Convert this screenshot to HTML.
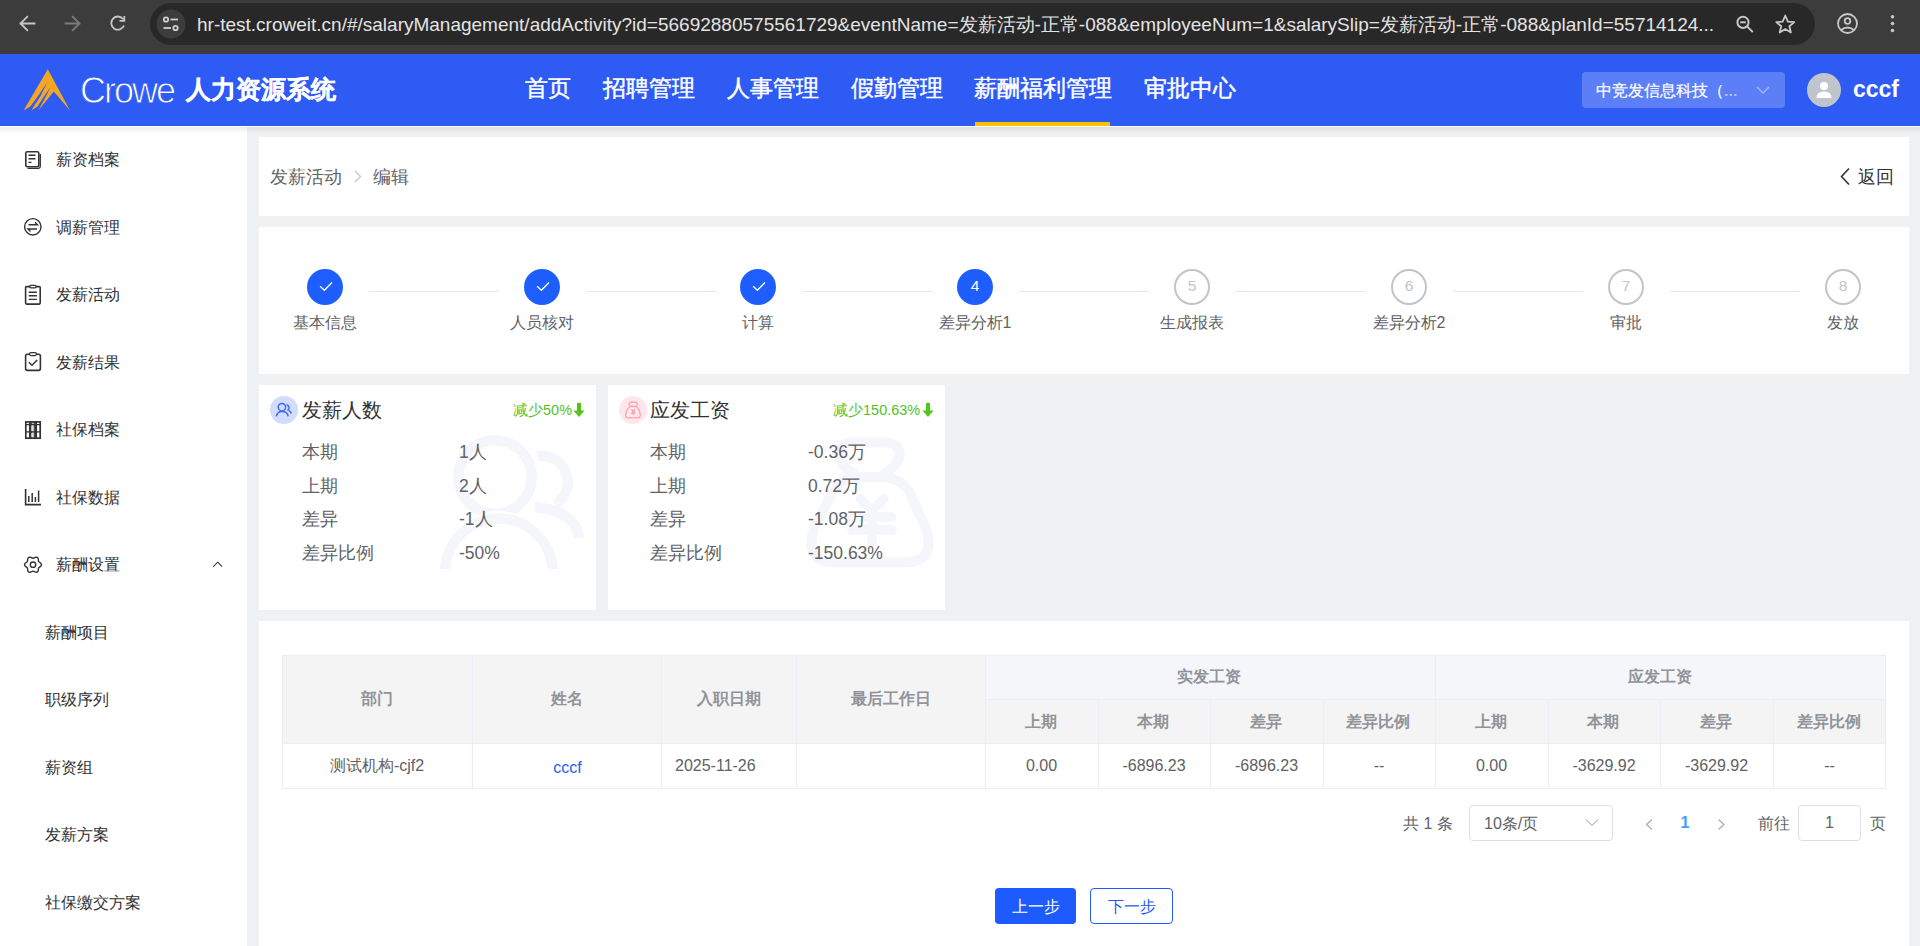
<!DOCTYPE html>
<html><head><meta charset="utf-8">
<style>
*{margin:0;padding:0;box-sizing:border-box}
html,body{width:1920px;height:946px;overflow:hidden;background:#f0f1f3;font-family:"Liberation Sans",sans-serif;color:#606266}
.abs{position:absolute}
#chrome{position:absolute;left:0;top:0;width:1920px;height:54px;background:#3c3c3c}
#omni{position:absolute;left:150px;top:3px;width:1665px;height:42px;border-radius:21px;background:#282828}
#url{position:absolute;left:197px;top:12px;font-size:19px;color:#e3e3e3;white-space:nowrap;letter-spacing:0}
#header{position:absolute;left:0;top:54px;width:1920px;height:72px;background:#2f5bf5}
.nav{position:absolute;top:74px;font-size:23px;color:#fff;white-space:nowrap;line-height:28px;-webkit-text-stroke:0.45px #fff}
#side{position:absolute;left:0;top:126px;width:247px;height:820px;background:#fff}
.mi{position:absolute;left:56px;font-size:16px;color:#303133;white-space:nowrap;line-height:20px}
.si{position:absolute;left:45px;font-size:16px;color:#303133;white-space:nowrap;line-height:20px}
.card{position:absolute;background:#fff}
</style></head><body>
<div id="chrome">
  <div id="omni"></div>
  <svg class="abs" style="left:0;top:0" width="1920" height="54">
    <g fill="none" stroke="#c7c7c7" stroke-width="1.8" stroke-linecap="square">
      <path d="M20.5 23.5 H34.5 M27.3 16.7 L20.5 23.5 L27.3 30.3"/>
    </g>
    <g fill="none" stroke="#7b7b7b" stroke-width="1.8" stroke-linecap="square">
      <path d="M65.5 23.5 H79.5 M72.7 16.7 L79.5 23.5 L72.7 30.3"/>
    </g>
    <g fill="none" stroke="#c7c7c7" stroke-width="2">
      <path d="M123.2 19.2 A6.6 6.6 0 1 0 124 25.5" stroke-width="1.8"/>
      <path d="M124.3 16 V20.8 H119.5" stroke-width="1.8"/>
    </g>
    <circle cx="171" cy="24" r="14.5" fill="#3d3d3d"/>
    <g fill="none" stroke="#d0d0d0" stroke-width="1.8">
      <circle cx="166" cy="19.5" r="2.2"/>
      <path d="M170.5 19.5 H178"/>
      <circle cx="175.5" cy="28" r="2.2"/>
      <path d="M163.5 28 H171"/>
    </g>
    <g fill="none" stroke="#c7c7c7" stroke-width="2">
      <circle cx="1743" cy="22.3" r="5.6"/>
      <path d="M1747.1 26.4 L1752.8 32.1"/>
      <path d="M1740.2 22.3 H1745.8"/>
    </g>
    <path d="M1785.3 15.5 L1787.9 21.7 L1794.3 22.1 L1789.4 26.3 L1790.9 32.5 L1785.3 29.1 L1779.7 32.5 L1781.2 26.3 L1776.3 22.1 L1782.7 21.7 Z" fill="none" stroke="#c7c7c7" stroke-width="1.8" stroke-linejoin="round"/>
    <g fill="none" stroke="#c7c7c7" stroke-width="1.8">
      <circle cx="1847.5" cy="23.5" r="9.5"/>
      <circle cx="1847.5" cy="21" r="2.8"/>
      <path d="M1841 30 Q1847.5 25 1854 30"/>
    </g>
    <g fill="#c7c7c7"><circle cx="1892.5" cy="16.8" r="1.8"/><circle cx="1892.5" cy="23.6" r="1.8"/><circle cx="1892.5" cy="30.5" r="1.8"/></g>
  </svg>

  <div id="url">hr-test.croweit.cn/#/salaryManagement/addActivity?id=56692880575561729&amp;eventName=发薪活动-正常-088&amp;employeeNum=1&amp;salarySlip=发薪活动-正常-088&amp;planId=55714124...</div>
</div>
<div id="header">
  <svg class="abs" style="left:0;top:0" width="200" height="72">
    <polygon points="47.8,15.3 70,56.4 53.8,37.4 38.3,56.4 45.9,42.5 50.5,33.3 43.9,42.5 37.5,52.6 31.4,56.4 33.7,52.6 40.3,42.5 47.4,28 37.8,42.5 30.2,52.6 23.6,56.4" fill="#f5a623"/>
  </svg>
  <div class="abs" style="left:80px;top:15px;font-size:36px;color:#fff;letter-spacing:-2px;line-height:44px;-webkit-text-stroke:0.9px #2f5bf5">Crowe</div>
  <div class="abs" style="left:186px;top:22px;font-size:24.5px;font-weight:bold;color:#fff;line-height:28px;white-space:nowrap;-webkit-text-stroke:0.35px #fff">人力资源系统</div>
  <div class="abs" style="left:1582px;top:18px;width:203px;height:36px;border-radius:4px;background:rgba(255,255,255,0.22)"></div>
  <div class="abs" style="left:1596px;top:27px;font-size:16px;color:#fff;line-height:20px;white-space:nowrap;-webkit-text-stroke:0.2px #fff">中竞发信息科技（<span style="color:#a9b9f3">...</span></div>
  <svg class="abs" style="left:1755px;top:30px" width="16" height="12"><path d="M2 3 L8 9 L14 3" fill="none" stroke="#a9b9f3" stroke-width="1.3"/></svg>
  <div class="abs" style="left:1807px;top:19px;width:34px;height:34px;border-radius:50%;background:#c0c4cc"></div>
  <svg class="abs" style="left:1807px;top:19px" width="34" height="34"><circle cx="17" cy="13" r="4" fill="#fff"/><path d="M9.5 25 Q9.5 18.5 17 18.5 Q24.5 18.5 24.5 25 Z" fill="#fff"/></svg>
  <div class="abs" style="left:1853px;top:21px;font-size:23px;font-weight:bold;color:#fff;line-height:28px">cccf</div>
</div>
<div class="nav" style="left:525px">首页</div>
<div class="nav" style="left:603px">招聘管理</div>
<div class="nav" style="left:727px">人事管理</div>
<div class="nav" style="left:851px">假勤管理</div>
<div class="nav" style="left:974px">薪酬福利管理</div>
<div class="nav" style="left:1144px">审批中心</div>
<div class="abs" style="left:975px;top:122px;width:135px;height:4px;background:#ffc000"></div>

<div id="side"><svg class="abs" style="left:0;top:0" width="247" height="820">
 <g fill="none" stroke="#333" stroke-width="1.6" transform="translate(0,-126)">
  <rect x="25.8" y="151.8" width="13" height="15" rx="1.5"/>
  <path d="M27.5 168.3 H38.5 Q40.3 168.3 40.3 166.5 V154" stroke-width="1.3"/>
  <path d="M28.5 155.2 H35.5 M28.5 158.8 H35.5 M28.5 162.4 H31.5" stroke-width="1.4"/>
  <circle cx="32.8" cy="226.8" r="8.2" stroke-width="1.4"/>
  <path d="M28.5 224.8 H37.5 L35 222.3 M37 229 H28 L30.5 231.5" stroke-width="1.4"/>
  <rect x="25.6" y="286.6" width="14.6" height="17.5" rx="1"/>
  <rect x="29.8" y="285.4" width="6.2" height="2.4" rx="1" fill="#fff" stroke-width="1.3"/>
  <path d="M28.7 292.2 H36.9 M28.7 295.8 H36.9 M28.7 299.4 H36.9" stroke-width="1.4"/>
  <rect x="25.6" y="354.2" width="14.8" height="16.2" rx="1.8"/>
  <rect x="29.5" y="352.6" width="7" height="3" rx="1.5" fill="#fff" stroke-width="1.3"/>
  <path d="M28.8 362.2 L32 365.3 L37.2 360" stroke-width="1.5"/>
  <rect x="25.8" y="421.9" width="4" height="16.3" stroke-width="1.7"/>
  <rect x="30.9" y="421.9" width="4.2" height="16.3" stroke-width="1.7" fill="#bbb"/>
  <rect x="36.2" y="421.9" width="4" height="16.3" stroke-width="1.7"/>
  <path d="M25.8 424.6 H40.2 M25.8 431.9 H40.2" stroke-width="1.3"/>
  <path d="M32 425.5 V431 M32 433 V437" stroke="#fff" stroke-width="1.2"/>
  <path d="M25.6 489 V504.6 H41" stroke-width="1.6"/>
  <path d="M28.8 496 V502 M32.2 493 V502 M35.4 497 V502 M38.6 490.5 V502" stroke-width="1.5"/>
  <path d="M41.50 564.70 L41.26 565.57 L40.64 566.32 L39.84 566.92 L39.11 567.42 L38.63 567.95 L38.41 568.63 L38.34 569.51 L38.23 570.50 L37.88 571.42 L37.25 572.06 L36.38 572.29 L35.41 572.13 L34.50 571.73 L33.70 571.35 L33.00 571.20 L32.30 571.35 L31.50 571.73 L30.59 572.13 L29.62 572.29 L28.75 572.06 L28.12 571.42 L27.77 570.50 L27.66 569.51 L27.59 568.63 L27.37 567.95 L26.89 567.42 L26.16 566.92 L25.36 566.32 L24.74 565.57 L24.50 564.70 L24.74 563.83 L25.36 563.08 L26.16 562.48 L26.89 561.98 L27.37 561.45 L27.59 560.77 L27.66 559.89 L27.77 558.90 L28.12 557.98 L28.75 557.34 L29.62 557.11 L30.59 557.27 L31.50 557.67 L32.30 558.05 L33.00 558.20 L33.70 558.05 L34.50 557.67 L35.41 557.27 L36.38 557.11 L37.25 557.34 L37.88 557.98 L38.23 558.90 L38.34 559.89 L38.41 560.77 L38.63 561.45 L39.11 561.98 L39.84 562.48 L40.64 563.08 L41.26 563.83 L41.50 564.70Z" stroke-width="1.4" stroke-linejoin="round"/>
  <circle cx="33" cy="564.7" r="2.7" stroke-width="1.4"/>
  <path d="M213.3 566.6 L217.7 562.2 L222.1 566.6" stroke="#303133" stroke-width="1.1"/>
 </g>
</svg>
</div>
<div class="mi" style="top:150px">薪资档案</div>
<div class="mi" style="top:218px">调薪管理</div>
<div class="mi" style="top:285px">发薪活动</div>
<div class="mi" style="top:353px">发薪结果</div>
<div class="mi" style="top:420px">社保档案</div>
<div class="mi" style="top:488px">社保数据</div>
<div class="mi" style="top:555px">薪酬设置</div>
<div class="si" style="top:623px">薪酬项目</div>
<div class="si" style="top:690px">职级序列</div>
<div class="si" style="top:758px">薪资组</div>
<div class="si" style="top:825px">发薪方案</div>
<div class="si" style="top:893px">社保缴交方案</div>

<div class="card" style="left:259px;top:137px;width:1650px;height:79px"></div>
<div class="card" style="left:259px;top:227px;width:1650px;height:147px"></div>
<div class="card" style="left:259px;top:385px;width:337px;height:225px"></div>
<div class="card" style="left:608px;top:385px;width:337px;height:225px"></div>
<div class="card" style="left:259px;top:621px;width:1650px;height:325px"></div>

<div class="abs" style="left:0;top:126px;width:1920px;height:1px;background:#fff"></div>
<div class="abs" style="left:0;top:127px;width:1920px;height:7px;background:linear-gradient(rgba(0,0,0,0.07),rgba(0,0,0,0))"></div>
<!-- breadcrumb -->
<div class="abs" style="left:270px;top:166px;font-size:18px;line-height:22px;color:#606266;white-space:nowrap">发薪活动</div>
<svg class="abs" style="left:350px;top:168px" width="16" height="16"><path d="M5 3 L10.5 8.5 L5 14" fill="none" stroke="#c0c4cc" stroke-width="1.2"/></svg>
<div class="abs" style="left:373px;top:166px;font-size:18px;line-height:22px;color:#606266;white-space:nowrap">编辑</div>
<svg class="abs" style="left:1836px;top:166px" width="18" height="21"><path d="M13 2.5 L5.5 10.5 L13 18.5" fill="none" stroke="#303133" stroke-width="1.6"/></svg>
<div class="abs" style="left:1858px;top:166px;font-size:18px;line-height:22px;color:#303133;white-space:nowrap">返回</div>
<div class="abs" style="left:307px;top:269px;width:36px;height:36px;border-radius:50%;background:#1e5eff"></div><svg class="abs" style="left:307px;top:269px" width="36" height="36"><path d="M13.1 17.2 L17.4 21.3 L25 13.5" fill="none" stroke="#fff" stroke-width="1.3"/></svg><div class="abs" style="left:225px;top:313px;width:200px;text-align:center;font-size:16px;line-height:20px;color:#606266">基本信息</div><div class="abs" style="left:369px;top:291px;width:130px;height:1px;background:#e4e7ed"></div><div class="abs" style="left:524px;top:269px;width:36px;height:36px;border-radius:50%;background:#1e5eff"></div><svg class="abs" style="left:524px;top:269px" width="36" height="36"><path d="M13.1 17.2 L17.4 21.3 L25 13.5" fill="none" stroke="#fff" stroke-width="1.3"/></svg><div class="abs" style="left:442px;top:313px;width:200px;text-align:center;font-size:16px;line-height:20px;color:#606266">人员核对</div><div class="abs" style="left:586px;top:291px;width:130px;height:1px;background:#e4e7ed"></div><div class="abs" style="left:740px;top:269px;width:36px;height:36px;border-radius:50%;background:#1e5eff"></div><svg class="abs" style="left:740px;top:269px" width="36" height="36"><path d="M13.1 17.2 L17.4 21.3 L25 13.5" fill="none" stroke="#fff" stroke-width="1.3"/></svg><div class="abs" style="left:658px;top:313px;width:200px;text-align:center;font-size:16px;line-height:20px;color:#606266">计算</div><div class="abs" style="left:802px;top:291px;width:130px;height:1px;background:#e4e7ed"></div><div class="abs" style="left:957px;top:269px;width:36px;height:36px;border-radius:50%;background:#1e5eff;color:#fff;font-size:15.5px;line-height:34px;text-align:center">4</div><div class="abs" style="left:875px;top:313px;width:200px;text-align:center;font-size:16px;line-height:20px;color:#606266">差异分析1</div><div class="abs" style="left:1019px;top:291px;width:130px;height:1px;background:#e4e7ed"></div><div class="abs" style="left:1174px;top:269px;width:36px;height:36px;border-radius:50%;border:2px solid #c0c4cc;color:#c0c4cc;font-size:15.5px;line-height:30px;text-align:center">5</div><div class="abs" style="left:1092px;top:313px;width:200px;text-align:center;font-size:16px;line-height:20px;color:#606266">生成报表</div><div class="abs" style="left:1236px;top:291px;width:130px;height:1px;background:#e4e7ed"></div><div class="abs" style="left:1391px;top:269px;width:36px;height:36px;border-radius:50%;border:2px solid #c0c4cc;color:#c0c4cc;font-size:15.5px;line-height:30px;text-align:center">6</div><div class="abs" style="left:1309px;top:313px;width:200px;text-align:center;font-size:16px;line-height:20px;color:#606266">差异分析2</div><div class="abs" style="left:1453px;top:291px;width:130px;height:1px;background:#e4e7ed"></div><div class="abs" style="left:1608px;top:269px;width:36px;height:36px;border-radius:50%;border:2px solid #c0c4cc;color:#c0c4cc;font-size:15.5px;line-height:30px;text-align:center">7</div><div class="abs" style="left:1526px;top:313px;width:200px;text-align:center;font-size:16px;line-height:20px;color:#606266">审批</div><div class="abs" style="left:1670px;top:291px;width:130px;height:1px;background:#e4e7ed"></div><div class="abs" style="left:1825px;top:269px;width:36px;height:36px;border-radius:50%;border:2px solid #c0c4cc;color:#c0c4cc;font-size:15.5px;line-height:30px;text-align:center">8</div><div class="abs" style="left:1743px;top:313px;width:200px;text-align:center;font-size:16px;line-height:20px;color:#606266">发放</div>
<!-- stat card 1 -->
<svg class="abs" style="left:259px;top:385px" width="337" height="225">
  <defs><clipPath id="c1"><rect x="0" y="0" width="337" height="184"/></clipPath></defs>
  <g fill="none" stroke-width="10.4" clip-path="url(#c1)">
    <path d="M277.9 71.2 A26.2 26.2 0 0 1 296 119.5" stroke="#f4f6fc"/>
    <path d="M276 122 Q317 126 320 153" stroke="#f4f6fc"/>
    <circle cx="236" cy="92" r="36.75" stroke="#fff" stroke-width="17"/>
    <circle cx="239.8" cy="187.4" r="53.85" stroke="#fff" stroke-width="17"/>
    <circle cx="236" cy="92" r="36.75" stroke="#f4f6fc" stroke-width="10.5"/>
    <circle cx="239.8" cy="187.4" r="53.85" stroke="#fff" stroke-width="15"/>
    <circle cx="239.8" cy="187.4" r="53.85" stroke="#f4f6fc" stroke-width="10.3"/>
  </g>
</svg>
<div class="abs" style="left:270px;top:396px;width:28px;height:28px;border-radius:50%;background:#d3dcfd"></div>
<svg class="abs" style="left:270px;top:396px" width="28" height="28">
  <g fill="none" stroke="#3c6af5" stroke-width="1.5">
    <circle cx="11.9" cy="11.2" r="3.7"/>
    <path d="M6.3 20.4 Q7.2 15.4 12.3 15.4 Q17.4 15.4 18.2 20.4"/>
    <path d="M16.6 8.8 A3 3 0 0 1 17.4 14.4"/>
    <path d="M18.8 14.6 Q20.6 15.4 21.3 17.6"/>
  </g>
</svg>
<div class="abs" style="left:302px;top:397px;font-size:20px;line-height:26px;color:#303133;white-space:nowrap">发薪人数</div>
<div class="abs" style="left:513px;top:401px;font-size:14.5px;line-height:18px;color:#55c21f;white-space:nowrap">减少50%</div>
<svg class="abs" style="left:572px;top:402px" width="14" height="16"><path d="M5 1 H9 V8.5 H12.5 L7 15 L1.5 8.5 H5 Z" fill="#52c41a"/></svg>
<div class="abs" style="left:302px;top:441px;font-size:17.5px;line-height:22px;color:#606266;white-space:nowrap">本期</div>
<div class="abs" style="left:302px;top:475px;font-size:17.5px;line-height:22px;color:#606266;white-space:nowrap">上期</div>
<div class="abs" style="left:302px;top:508px;font-size:17.5px;line-height:22px;color:#606266;white-space:nowrap">差异</div>
<div class="abs" style="left:302px;top:542px;font-size:17.5px;line-height:22px;color:#606266;white-space:nowrap">差异比例</div>
<div class="abs" style="left:459px;top:441px;font-size:17.5px;line-height:22px;color:#606266;white-space:nowrap">1人</div>
<div class="abs" style="left:459px;top:475px;font-size:17.5px;line-height:22px;color:#606266;white-space:nowrap">2人</div>
<div class="abs" style="left:459px;top:508px;font-size:17.5px;line-height:22px;color:#606266;white-space:nowrap">-1人</div>
<div class="abs" style="left:459px;top:542px;font-size:17.5px;line-height:22px;color:#606266;white-space:nowrap">-50%</div>

<!-- stat card 2 -->
<svg class="abs" style="left:608px;top:385px" width="337" height="225">
  <g fill="none" stroke="#f4f6fc" stroke-width="10">
    <path d="M248 89.5 Q231 81 230.7 69 Q231 57.6 246 57.6 H276 Q291.8 57.6 291.8 69 Q291.5 81 274 89.5"/>
    <path d="M246 92 Q232 95 225.5 105.5 L208.5 138 Q201 153 204.5 165 Q208 177.6 230 177.6 H294 Q316 177.6 319.5 165 Q323 153 315.5 138 L300.7 105.5 Q294 95 278 92 Z"/>
    <path d="M252 114 L264 125.5 L276 114 M264 125.5 V157 M244 132 H284 M244 145 H284" stroke-width="9.5" stroke-linecap="round"/>
  </g>
</svg>
<div class="abs" style="left:619px;top:396px;width:28px;height:28px;border-radius:50%;background:#fee7ea"></div>
<svg class="abs" style="left:619px;top:396px" width="28" height="28">
  <g fill="none" stroke="#f9a3ae" stroke-width="1.3">
    <path d="M11.6 10.4 Q10 10 10 8.2 Q10 6 14.2 6 Q18.3 6 18.3 8.2 Q18.3 10 16.8 10.4"/>
    <path d="M11.4 10.5 Q9 11.2 7.8 14.5 L6.8 18 Q6 21.9 9.5 21.9 H18.5 Q22 21.9 21.2 18 L20.2 14.5 Q19 11.2 16.8 10.5 Z"/>
    <path d="M12.4 13.2 L14.2 15.3 L16 13.2 M14.2 15.3 V18.8 M12.4 16.1 H16 M12.4 17.6 H16" stroke-width="1.1"/>
  </g>
</svg>
<div class="abs" style="left:650px;top:397px;font-size:20px;line-height:26px;color:#303133;white-space:nowrap">应发工资</div>
<div class="abs" style="left:833px;top:401px;font-size:14.5px;line-height:18px;color:#55c21f;white-space:nowrap">减少150.63%</div>
<svg class="abs" style="left:921px;top:402px" width="14" height="16"><path d="M5 1 H9 V8.5 H12.5 L7 15 L1.5 8.5 H5 Z" fill="#52c41a"/></svg>
<div class="abs" style="left:650px;top:441px;font-size:17.5px;line-height:22px;color:#606266;white-space:nowrap">本期</div>
<div class="abs" style="left:650px;top:475px;font-size:17.5px;line-height:22px;color:#606266;white-space:nowrap">上期</div>
<div class="abs" style="left:650px;top:508px;font-size:17.5px;line-height:22px;color:#606266;white-space:nowrap">差异</div>
<div class="abs" style="left:650px;top:542px;font-size:17.5px;line-height:22px;color:#606266;white-space:nowrap">差异比例</div>
<div class="abs" style="left:808px;top:441px;font-size:17.5px;line-height:22px;color:#606266;white-space:nowrap">-0.36万</div>
<div class="abs" style="left:808px;top:475px;font-size:17.5px;line-height:22px;color:#606266;white-space:nowrap">0.72万</div>
<div class="abs" style="left:808px;top:508px;font-size:17.5px;line-height:22px;color:#606266;white-space:nowrap">-1.08万</div>
<div class="abs" style="left:808px;top:542px;font-size:17.5px;line-height:22px;color:#606266;white-space:nowrap">-150.63%</div>

<!-- table -->
<div class="abs" style="left:282px;top:655px;width:1604px;height:134px;border:1px solid #ebeef5;background:#fff"></div>
<div class="abs" style="left:283px;top:656px;width:1602px;height:87px;background:#f4f4f5"></div>
<div class="abs" style="left:986px;top:656px;width:899px;height:43px;background:#f5f6fa"></div>
<div class="abs" style="left:282px;top:743px;width:1604px;height:1px;background:#ebeef5"></div>
<div class="abs" style="left:985px;top:699px;width:901px;height:1px;background:#ebeef5"></div>
<div class="abs" style="left:472px;top:655px;width:1px;height:134px;background:#ebeef5"></div>
<div class="abs" style="left:661px;top:655px;width:1px;height:134px;background:#ebeef5"></div>
<div class="abs" style="left:796px;top:655px;width:1px;height:134px;background:#ebeef5"></div>
<div class="abs" style="left:985px;top:655px;width:1px;height:134px;background:#ebeef5"></div>
<div class="abs" style="left:1435px;top:655px;width:1px;height:134px;background:#ebeef5"></div>
<div class="abs" style="left:1098px;top:699px;width:1px;height:90px;background:#ebeef5"></div>
<div class="abs" style="left:1210px;top:699px;width:1px;height:90px;background:#ebeef5"></div>
<div class="abs" style="left:1323px;top:699px;width:1px;height:90px;background:#ebeef5"></div>
<div class="abs" style="left:1548px;top:699px;width:1px;height:90px;background:#ebeef5"></div>
<div class="abs" style="left:1660px;top:699px;width:1px;height:90px;background:#ebeef5"></div>
<div class="abs" style="left:1773px;top:699px;width:1px;height:90px;background:#ebeef5"></div>
<div class="abs" style="left:282px;top:689px;width:190px;font-size:16px;line-height:20px;font-weight:bold;color:#909399;text-align:center;white-space:nowrap">部门</div>
<div class="abs" style="left:472px;top:689px;width:189px;font-size:16px;line-height:20px;font-weight:bold;color:#909399;text-align:center;white-space:nowrap">姓名</div>
<div class="abs" style="left:661px;top:689px;width:135px;font-size:16px;line-height:20px;font-weight:bold;color:#909399;text-align:center;white-space:nowrap">入职日期</div>
<div class="abs" style="left:796px;top:689px;width:189px;font-size:16px;line-height:20px;font-weight:bold;color:#909399;text-align:center;white-space:nowrap">最后工作日</div>
<div class="abs" style="left:984px;top:667px;width:450px;font-size:16px;line-height:20px;font-weight:bold;color:#909399;text-align:center;white-space:nowrap">实发工资</div>
<div class="abs" style="left:1434px;top:667px;width:451px;font-size:16px;line-height:20px;font-weight:bold;color:#909399;text-align:center;white-space:nowrap">应发工资</div>
<div class="abs" style="left:984px;top:712px;width:113px;font-size:16px;line-height:20px;font-weight:bold;color:#909399;text-align:center;white-space:nowrap">上期</div>
<div class="abs" style="left:1097px;top:712px;width:112px;font-size:16px;line-height:20px;font-weight:bold;color:#909399;text-align:center;white-space:nowrap">本期</div>
<div class="abs" style="left:1209px;top:712px;width:113px;font-size:16px;line-height:20px;font-weight:bold;color:#909399;text-align:center;white-space:nowrap">差异</div>
<div class="abs" style="left:1322px;top:712px;width:112px;font-size:16px;line-height:20px;font-weight:bold;color:#909399;text-align:center;white-space:nowrap">差异比例</div>
<div class="abs" style="left:1434px;top:712px;width:113px;font-size:16px;line-height:20px;font-weight:bold;color:#909399;text-align:center;white-space:nowrap">上期</div>
<div class="abs" style="left:1547px;top:712px;width:112px;font-size:16px;line-height:20px;font-weight:bold;color:#909399;text-align:center;white-space:nowrap">本期</div>
<div class="abs" style="left:1659px;top:712px;width:113px;font-size:16px;line-height:20px;font-weight:bold;color:#909399;text-align:center;white-space:nowrap">差异</div>
<div class="abs" style="left:1772px;top:712px;width:113px;font-size:16px;line-height:20px;font-weight:bold;color:#909399;text-align:center;white-space:nowrap">差异比例</div>
<div class="abs" style="left:282px;top:756px;width:190px;font-size:16px;line-height:20px;color:#606266;text-align:center;white-space:nowrap">测试机构-cjf2</div>
<div class="abs" style="left:473px;top:758px;width:189px;font-size:16px;line-height:20px;color:#1f5bff;text-align:center;white-space:nowrap">cccf</div>
<div class="abs" style="left:675px;top:756px;font-size:16px;line-height:20px;color:#606266;text-align:center;white-space:nowrap;text-align:left">2025-11-26</div>
<div class="abs" style="left:985px;top:756px;width:113px;font-size:16px;line-height:20px;color:#606266;text-align:center;white-space:nowrap">0.00</div>
<div class="abs" style="left:1098px;top:756px;width:112px;font-size:16px;line-height:20px;color:#606266;text-align:center;white-space:nowrap">-6896.23</div>
<div class="abs" style="left:1210px;top:756px;width:113px;font-size:16px;line-height:20px;color:#606266;text-align:center;white-space:nowrap">-6896.23</div>
<div class="abs" style="left:1323px;top:756px;width:112px;font-size:16px;line-height:20px;color:#606266;text-align:center;white-space:nowrap">--</div>
<div class="abs" style="left:1435px;top:756px;width:113px;font-size:16px;line-height:20px;color:#606266;text-align:center;white-space:nowrap">0.00</div>
<div class="abs" style="left:1548px;top:756px;width:112px;font-size:16px;line-height:20px;color:#606266;text-align:center;white-space:nowrap">-3629.92</div>
<div class="abs" style="left:1660px;top:756px;width:113px;font-size:16px;line-height:20px;color:#606266;text-align:center;white-space:nowrap">-3629.92</div>
<div class="abs" style="left:1773px;top:756px;width:113px;font-size:16px;line-height:20px;color:#606266;text-align:center;white-space:nowrap">--</div>
<div class="abs" style="left:1403px;top:814px;font-size:16px;line-height:20px;color:#606266;white-space:nowrap">共 1 条</div>
<div class="abs" style="left:1469px;top:805px;width:144px;height:36px;border:1px solid #dcdfe6;border-radius:4px;background:#fff"></div>
<div class="abs" style="left:1484px;top:814px;font-size:16px;line-height:20px;color:#606266;white-space:nowrap">10条/页</div>
<svg class="abs" style="left:1584px;top:816px" width="16" height="14"><path d="M2 3.5 L8 9.5 L14 3.5" fill="none" stroke="#c0c4cc" stroke-width="1.2"/></svg>
<svg class="abs" style="left:1642px;top:816px" width="14" height="16"><path d="M10 3.5 L4.5 8.5 L10 13.5" fill="none" stroke="#a8abb2" stroke-width="1.2"/></svg>
<div class="abs" style="left:1676px;top:813px;width:18px;text-align:center;font-size:16px;line-height:20px;font-weight:bold;color:#409eff">1</div>
<svg class="abs" style="left:1714px;top:816px" width="14" height="16"><path d="M4.5 3.5 L10 8.5 L4.5 13.5" fill="none" stroke="#a8abb2" stroke-width="1.2"/></svg>
<div class="abs" style="left:1758px;top:814px;font-size:16px;line-height:20px;color:#606266;white-space:nowrap">前往</div>
<div class="abs" style="left:1798px;top:805px;width:63px;height:36px;border:1px solid #dcdfe6;border-radius:4px;background:#fff;text-align:center;font-size:16px;line-height:34px;color:#606266">1</div>
<div class="abs" style="left:1870px;top:814px;font-size:16px;line-height:20px;color:#606266;white-space:nowrap">页</div>
<div class="abs" style="left:995px;top:888px;width:81px;height:36px;border-radius:4px;background:#1d5bff;color:#fff;font-size:16px;line-height:36px;padding-top:1px;text-align:center">上一步</div>
<div class="abs" style="left:1090px;top:888px;width:83px;height:36px;border-radius:4px;border:1px solid #1d5bff;background:#fff;color:#1d5bff;font-size:16px;line-height:34px;padding-top:1px;text-align:center">下一步</div>
</body></html>
